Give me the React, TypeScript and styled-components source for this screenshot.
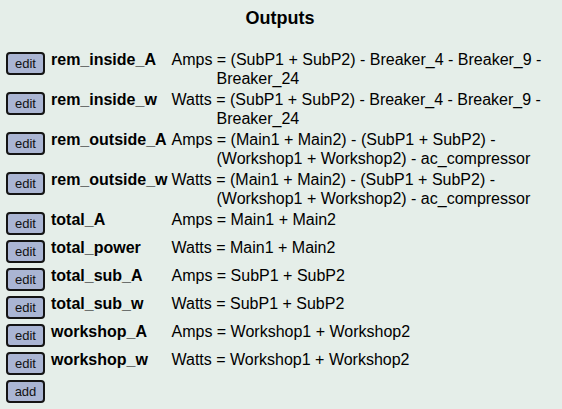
import { Fragment } from 'react'
import styled, { createGlobalStyle } from 'styled-components'

const GlobalStyle = createGlobalStyle`
  html, body {
    margin: 0;
    padding: 0;
    background: #e5eee9;
  }
  body {
    font-family: 'Liberation Sans', Arial, sans-serif;
    color: #000;
  }
`

const Page = styled.div`
  width: 562px;
  height: 409px;
  box-sizing: border-box;
  padding: 8px 8px 0 6px;
  background: #e5eee9;
`

const Title = styled.h2`
  margin: 0 0 22px;
  font-size: 18px;
  line-height: 21px;
  font-weight: 700;
  text-align: center;
`

const List = styled.div`
  display: grid;
  grid-template-columns: auto auto 1fr;
  column-gap: 4px;
  row-gap: 3px;
  align-items: start;
`

const Button = styled.button`
  width: 39px;
  height: 23px;
  margin: 1px 2px 1px 0;
  padding: 0;
  box-sizing: border-box;
  border: 2px solid #141414;
  border-radius: 4px;
  background: #aab5d3;
  font-family: 'Liberation Sans', Arial, sans-serif;
  font-size: 13px;
  color: #111;
  text-align: center;
  line-height: 18px;
`

const Name = styled.div`
  font-size: 16px;
  line-height: 18.5px;
  font-weight: 700;
  white-space: nowrap;
`

const Formula = styled.div`
  font-size: 16px;
  line-height: 18.5px;
  padding-left: 45px;
  text-indent: -45px;
`

interface Output {
  name: string
  formula: string
}

const outputs: Output[] = [
  { name: 'rem_inside_A', formula: 'Amps = (SubP1 + SubP2) - Breaker_4 - Breaker_9 - Breaker_24' },
  { name: 'rem_inside_w', formula: 'Watts = (SubP1 + SubP2) - Breaker_4 - Breaker_9 - Breaker_24' },
  { name: 'rem_outside_A', formula: 'Amps = (Main1 + Main2) - (SubP1 + SubP2) - (Workshop1 + Workshop2) - ac_compressor' },
  { name: 'rem_outside_w', formula: 'Watts = (Main1 + Main2) - (SubP1 + SubP2) - (Workshop1 + Workshop2) - ac_compressor' },
  { name: 'total_A', formula: 'Amps = Main1 + Main2' },
  { name: 'total_power', formula: 'Watts = Main1 + Main2' },
  { name: 'total_sub_A', formula: 'Amps = SubP1 + SubP2' },
  { name: 'total_sub_w', formula: 'Watts = SubP1 + SubP2' },
  { name: 'workshop_A', formula: 'Amps = Workshop1 + Workshop2' },
  { name: 'workshop_w', formula: 'Watts = Workshop1 + Workshop2' },
]

export default function App() {
  return (
    <>
      <GlobalStyle />
      <Page>
        <Title>Outputs</Title>
        <List>
          {outputs.map((o) => (
            <Fragment key={o.name}>
              <Button>edit</Button>
              <Name>{o.name}</Name>
              <Formula>{o.formula}</Formula>
            </Fragment>
          ))}
          <Button>add</Button>
        </List>
      </Page>
    </>
  )
}
